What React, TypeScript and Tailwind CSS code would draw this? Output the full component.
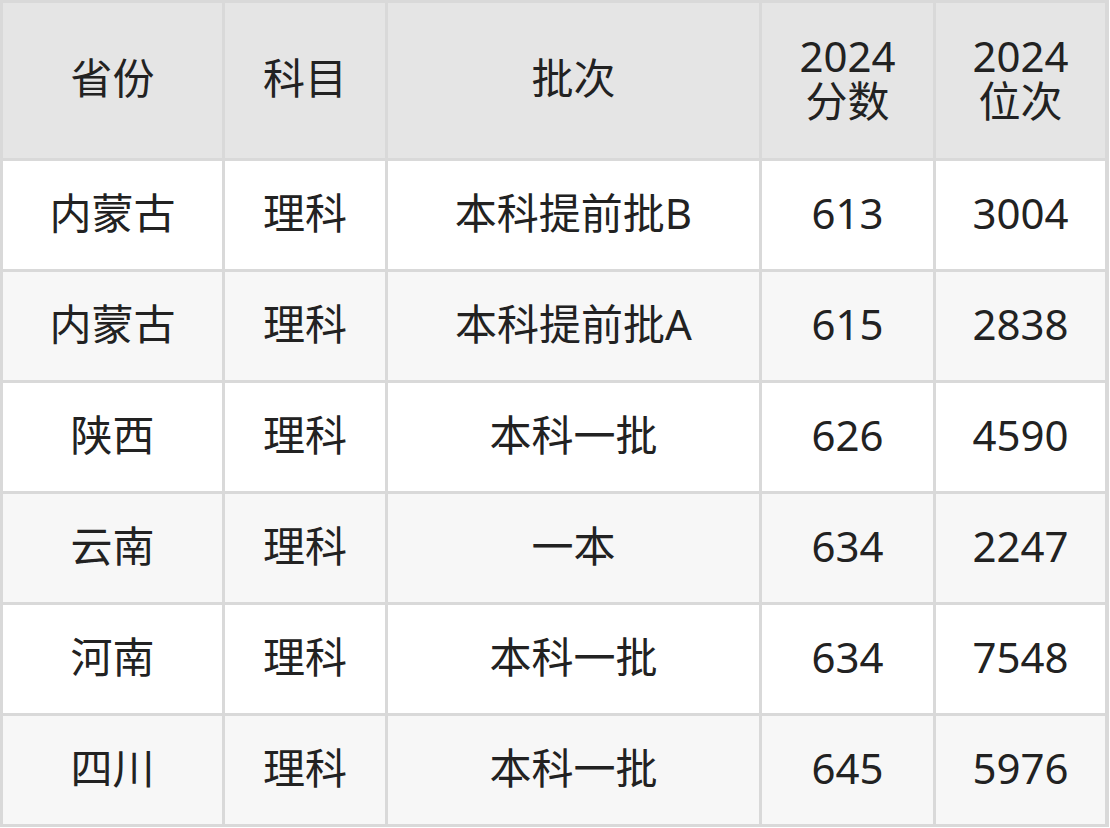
const rows = [
  ["内蒙古", "理科", "本科提前批B", "613", "3004"],
  ["内蒙古", "理科", "本科提前批A", "615", "2838"],
  ["陕西", "理科", "本科一批", "626", "4590"],
  ["云南", "理科", "一本", "634", "2247"],
  ["河南", "理科", "本科一批", "634", "7548"],
  ["四川", "理科", "本科一批", "645", "5976"],
];

const headers = ["省份", "科目", "批次", "2024\n分数", "2024\n位次"];

export default function App() {
  return (
    <div className="w-[1110px] h-[828px] bg-white">
      <div
        className="grid w-[1109px] gap-[3px] bg-[#d9d9d9] p-[3px] text-[42px] text-[#222] grid-cols-[219px_160px_371px_171px_169px] grid-rows-[155px_repeat(6,108px)]"
        style={{ fontFamily: '"Noto Sans", "Noto Sans CJK SC", sans-serif' }}
      >
        {headers.map((h) => (
          <div
            key={h}
            className="flex items-center justify-center bg-[#e5e5e5] pb-[6px] text-center leading-[45px] whitespace-pre-line"
          >
            {h}
          </div>
        ))}
        {rows.map((row, i) =>
          row.map((cell, j) => (
            <div
              key={`${i}-${j}`}
              className={`flex items-center justify-center pb-[4px] leading-none ${
                i % 2 === 0 ? "bg-white" : "bg-[#f7f7f7]"
              }`}
            >
              {cell}
            </div>
          )),
        )}
      </div>
    </div>
  );
}
